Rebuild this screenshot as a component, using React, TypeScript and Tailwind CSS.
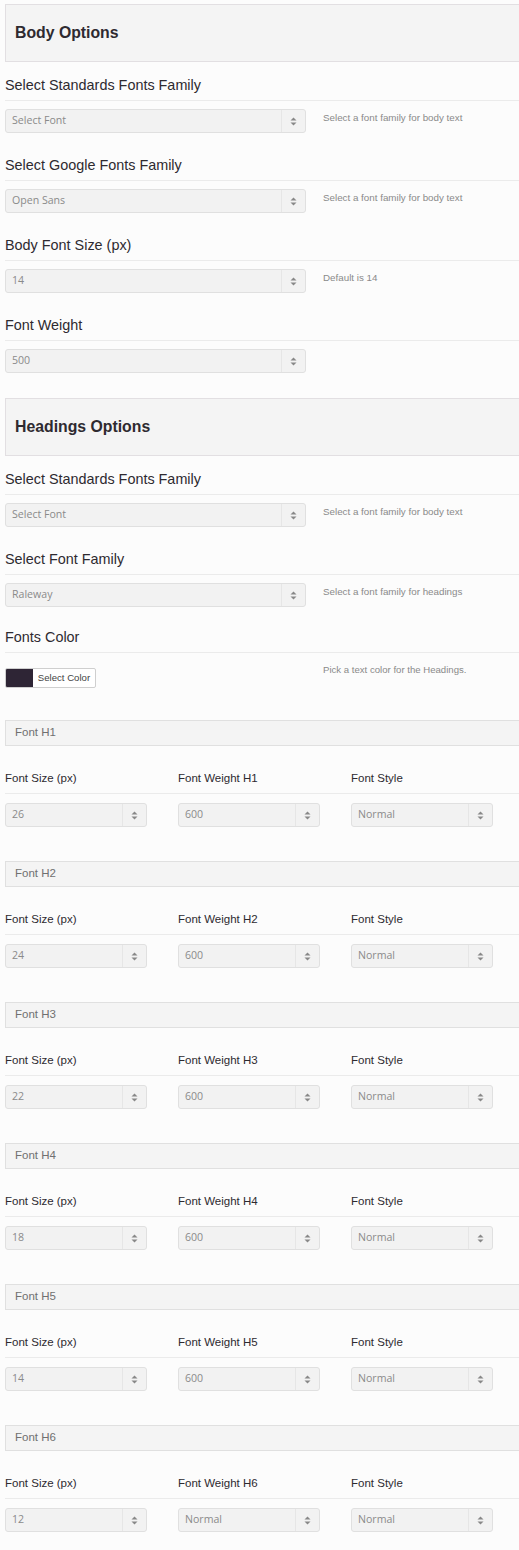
const BODY_ROWS = [
  { label: 'Select Standards Fonts Family', value: 'Select Font', help: 'Select a font family for body text' },
  { label: 'Select Google Fonts Family', value: 'Open Sans', help: 'Select a font family for body text' },
  { label: 'Body Font Size (px)', value: '14', help: 'Default is 14' },
  { label: 'Font Weight', value: '500', help: '' },
];

const HEADING_ROWS = [
  { label: 'Select Standards Fonts Family', value: 'Select Font', help: 'Select a font family for body text' },
  { label: 'Select Font Family', value: 'Raleway', help: 'Select a font family for headings' },
];

const SIZES = [
  { tag: 'H1', size: '26', weight: '600' },
  { tag: 'H2', size: '24', weight: '600' },
  { tag: 'H3', size: '22', weight: '600' },
  { tag: 'H4', size: '18', weight: '600' },
  { tag: 'H5', size: '14', weight: '600' },
  { tag: 'H6', size: '12', weight: 'Normal' },
];

function Arrows() {
  return (
    <svg width="7" height="9" viewBox="0 0 7 9" className="text-[#888]">
      <path d="M3.5 0.5L6.5 3.5H0.5Z" fill="currentColor" />
      <path d="M3.5 8.5L6.5 5.5H0.5Z" fill="currentColor" />
    </svg>
  );
}

function Select({ value, wide }: { value: string; wide?: boolean }) {
  return (
    <div
      className={`flex h-[24px] items-stretch rounded-[3px] border border-[#e0e0e0] bg-[#f2f2f2] ${
        wide ? 'w-[301px]' : 'w-[142px]'
      }`}
    >
      <span className="flex flex-1 items-center pl-[6px] [font-family:'Open_Sans',sans-serif] text-[10.6px] text-[#8a8a8a]">
        {value}
      </span>
      <span className="flex w-[24px] items-center justify-center border-l border-[#e6e6e6]">
        <Arrows />
      </span>
    </div>
  );
}

function Panel({ title, className }: { title: string; className?: string }) {
  return (
    <div
      className={`flex h-[58px] items-center border-y border-l border-[#e2dfe2] bg-[#f4f4f4] pl-[9px] ${className ?? ''}`}
    >
      <h2 className="text-[15.8px] font-bold text-[#2e2a30]">{title}</h2>
    </div>
  );
}

function Label({ text }: { text: string }) {
  return (
    <div className="border-b border-[#ebebeb] pb-[5px]">
      <span className="block text-[14.4px] leading-[20px] text-[#2e2a30]">{text}</span>
    </div>
  );
}

function Row({ label, value, help, first }: { label: string; value: string; help: string; first?: boolean }) {
  return (
    <div className={first ? 'mt-[13px]' : 'mt-[22px]'}>
      <Label text={label} />
      <div className="mt-[8px] flex">
        <Select value={value} wide />
        {help && <p className="ml-[17px] mt-[2px] text-[9.8px] text-[#8a8a8a]">{help}</p>}
      </div>
    </div>
  );
}

function SizeGroup({ tag, size, weight, first }: { tag: string; size: string; weight: string; first?: boolean }) {
  return (
    <div className={first ? 'mt-[32px]' : 'mt-[34px]'}>
      <div className="flex h-[26px] items-center border-y border-l border-[#e0e0e0] bg-[#f4f4f4] pl-[9px] text-[11.5px] text-[#707070]">
        Font {tag}
      </div>
      <div className="mt-[23px] grid grid-cols-[173px_173px_173px] border-b border-[#ebebeb] pb-[6px] text-[11.5px] leading-[18px] text-[#2e2a30]">
        <span>Font Size (px)</span>
        <span>Font Weight {tag}</span>
        <span>Font Style</span>
      </div>
      <div className="mt-[9px] grid grid-cols-[173px_173px_173px]">
        <Select value={size} />
        <Select value={weight} />
        <Select value="Normal" />
      </div>
    </div>
  );
}

export default function App() {
  return (
    <div className="min-h-[1550px] overflow-hidden bg-[#fcfcfc] pb-[20px] pl-[5px] pt-[4px] [font-family:'Liberation_Sans',Arial,sans-serif]">
      <Panel title="Body Options" />
      {BODY_ROWS.map((r, i) => (
        <Row key={r.label} {...r} first={i === 0} />
      ))}

      <Panel title="Headings Options" className="mt-[25px]" />
      {HEADING_ROWS.map((r, i) => (
        <Row key={r.label} {...r} first={i === 0} />
      ))}

      <div className="mt-[20px]">
        <Label text="Fonts Color" />
        <div className="mt-[15px] flex">
          <div className="flex h-[20px] w-[91px] overflow-hidden rounded-[2px] border border-[#cfcfcf] bg-white">
            <span className="w-[27px] bg-[#2e2535]" />
            <span className="flex flex-1 items-center justify-center text-[9.6px] text-[#444]">Select Color</span>
          </div>
          <p className="ml-[227px] mt-[-5px] text-[9.6px] text-[#8a8a8a]">Pick a text color for the Headings.</p>
        </div>
      </div>

      {SIZES.map((s, i) => (
        <SizeGroup key={s.tag} {...s} first={i === 0} />
      ))}
    </div>
  );
}
